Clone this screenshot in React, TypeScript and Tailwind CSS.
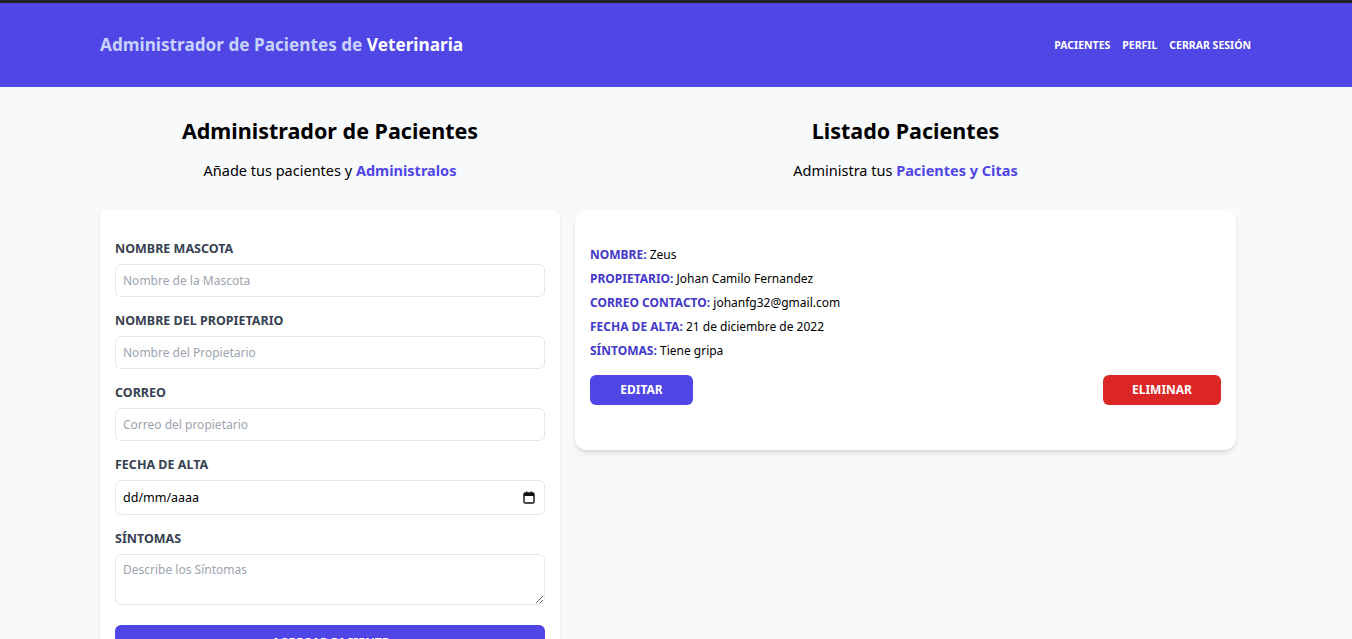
import React from "react";

const font = { fontFamily: '"Noto Sans", "Open Sans", sans-serif' };

function Field({ label, placeholder }: { label: string; placeholder: string }) {
  return (
    <div className="mb-[15px]">
      <label className="block text-[12.5px] font-bold uppercase text-[#374151] leading-[18px] mb-[6px]">{label}</label>
      <input
        type="text"
        placeholder={placeholder}
        className="w-full h-[33px] border border-[#e5e7eb] rounded-md px-[7px] text-[12px] placeholder-[#9ca3af] bg-white outline-none"
      />
    </div>
  );
}

function Row({ label, value }: { label: string; value: string }) {
  return (
    <p className="text-[12px] leading-[24px] text-black">
      <span className="font-bold uppercase text-[#4338ca]">{label}: </span>
      {value}
    </p>
  );
}

export default function App() {
  return (
    <div style={font} className="min-h-[639px] bg-[#f8f9fb] border-t-[3px] border-[#222228]">
      <header className="bg-[#4f46e5] h-[84px]">
        <div className="flex items-center justify-between h-full pl-[100px] pr-[101px]">
          <h1 className="text-[17.2px] font-bold text-[#c7d2fe]">
            Administrador de Pacientes de <span className="text-white">Veterinaria</span>
          </h1>
          <nav className="flex gap-[12px] pt-[2px] text-[10.5px] font-bold uppercase text-white">
            <a>Pacientes</a>
            <a>Perfil</a>
            <a>Cerrar Sesión</a>
          </nav>
        </div>
      </header>
      <main className="flex gap-[15px] pl-[100px] pt-[30px]">
        <div className="w-[460px] shrink-0">
          <h2 className="text-center text-[21.5px] font-bold text-black leading-[28px]">Administrador de Pacientes</h2>
          <p className="text-center text-[14.5px] mt-[15px] mb-[30px] leading-[20px]">
            Añade tus pacientes y <span className="font-bold text-[#4f46e5]">Administralos</span>
          </p>
          <form className="bg-white rounded-lg shadow-sm px-[15px] pt-[30px] pb-[20px]">
            <Field label="Nombre Mascota" placeholder="Nombre de la Mascota" />
            <Field label="Nombre del Propietario" placeholder="Nombre del Propietario" />
            <Field label="Correo" placeholder="Correo del propietario" />
            <div className="mb-[15px]">
              <label className="block text-[12.5px] font-bold uppercase text-[#374151] leading-[18px] mb-[6px]">Fecha de Alta</label>
              <div className="relative">
                <input
                  type="text"
                  defaultValue="dd/mm/aaaa"
                  className="w-full h-[35px] border border-[#e5e7eb] rounded-md px-[7px] text-[12.5px] text-black bg-white outline-none"
                />
                <svg className="absolute right-[10px] top-[11px]" width="12" height="13" viewBox="0 0 12 13" fill="none">
                  <rect x="1" y="2" width="10" height="10" rx="1.2" stroke="#111" strokeWidth="1.4" />
                  <rect x="1" y="2" width="10" height="3" fill="#111" />
                  <rect x="3" y="0.5" width="1.4" height="2.5" fill="#111" />
                  <rect x="7.6" y="0.5" width="1.4" height="2.5" fill="#111" />
                </svg>
              </div>
            </div>
            <div className="mb-[20px]">
              <label className="block text-[12.5px] font-bold uppercase text-[#374151] leading-[18px] mb-[6px]">Síntomas</label>
              <textarea
                placeholder="Describe los Síntomas"
                className="block w-full h-[51px] border border-[#e5e7eb] rounded-md px-[7px] py-[6px] text-[12px] placeholder-[#9ca3af] bg-white outline-none"
              />
            </div>
            <button type="button" className="w-full h-[36px] bg-[#4f46e5] text-white font-bold uppercase text-[12px] rounded-md">
              Agregar Paciente
            </button>
          </form>
        </div>
        <div className="w-[661px] shrink-0">
          <h2 className="text-center text-[21.5px] font-bold text-black leading-[28px]">Listado Pacientes</h2>
          <p className="text-center text-[14.5px] mt-[15px] mb-[30px] leading-[20px]">
            Administra tus <span className="font-bold text-[#4f46e5]">Pacientes y Citas</span>
          </p>
          <div className="bg-white rounded-xl shadow-md px-[15px] pt-[33px] pb-[45px]">
            <Row label="Nombre" value="Zeus" />
            <Row label="Propietario" value="Johan Camilo Fernandez" />
            <Row label="Correo contacto" value="johanfg32@gmail.com" />
            <Row label="Fecha de alta" value="21 de diciembre de 2022" />
            <Row label="Síntomas" value="Tiene gripa" />
            <div className="flex justify-between mt-[12px]">
              <button type="button" className="w-[103px] h-[30px] bg-[#4f46e5] text-white font-bold uppercase text-[12px] rounded-md">
                Editar
              </button>
              <button type="button" className="w-[118px] h-[30px] bg-[#dc2626] text-white font-bold uppercase text-[12px] rounded-md">
                Eliminar
              </button>
            </div>
          </div>
        </div>
      </main>
    </div>
  );
}
